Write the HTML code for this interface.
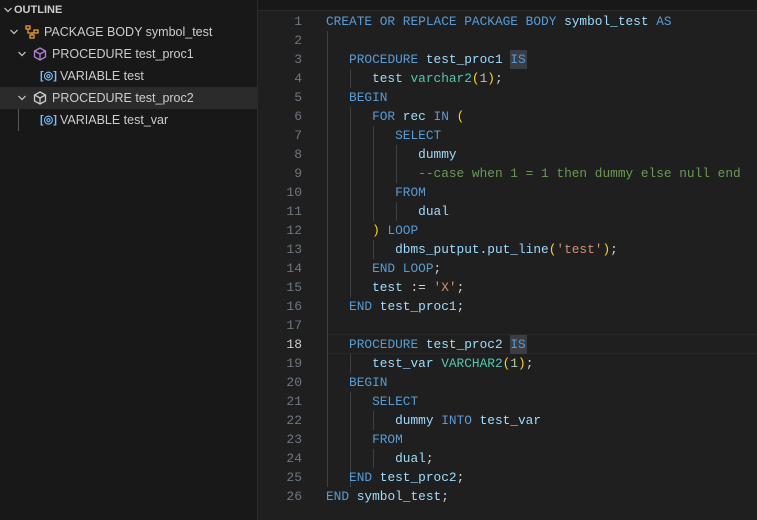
<!DOCTYPE html>
<html><head><meta charset="utf-8"><style>
body{margin:0;width:757px;height:520px;background:#1f1f1f;overflow:hidden;position:relative;font-family:"Liberation Sans",sans-serif}
#side{position:absolute;left:0;top:0;width:257px;height:520px;background:#181818;border-right:1px solid #2b2b2b}
.row{position:absolute;left:0;width:257px;height:22px;line-height:22px;font-size:12.5px;color:#cccccc;white-space:nowrap}
.sel{background:#2b2b2b}
.chev{position:absolute;top:0;width:10px;height:22px}
.ln{position:absolute;width:40px;left:262px;text-align:right;font-family:"Liberation Mono",monospace;font-size:13px;color:#6e7681;line-height:19px}
.cd{position:absolute;left:326px;font-family:"Liberation Mono",monospace;font-size:12.8px;color:#9cdcfe;line-height:19px;white-space:pre}
.k{color:#569cd6}.t{color:#4ec9b0}.n{color:#b5cea8}.s{color:#ce9178}.c{color:#6a9955}.y{color:#ffd700}.w{color:#d4d4d4}.p{color:#da70d6}
.g{position:absolute;width:1px;background:#404040}
</style></head><body>
<div style="position:absolute;left:258px;top:0;width:499px;height:10px;background:#181818;border-bottom:1px solid #2b2b2b"></div>
<div id="side">
<div class="row" style="top:-1px;font-weight:bold;font-size:11px"><svg class="chev" style="left:3px" viewBox="0 0 10 22"><path d="M1.5 9l3.5 3.5L8.5 9" stroke="#ccc" fill="none" stroke-width="1.2"/></svg><span style="position:absolute;left:14px">OUTLINE</span></div>
<div class="row" style="top:21px"><svg class="chev" style="left:9px" viewBox="0 0 10 22"><path d="M1.5 9l3.5 3.5L8.5 9" stroke="#ccc" fill="none" stroke-width="1.2"/></svg>
<svg style="position:absolute;left:25px;top:4px" width="14" height="14" viewBox="0 0 14 14"><g stroke="#ee9d28" fill="none" stroke-width="1.3"><rect x="1" y="1" width="4" height="3"/><rect x="9" y="5" width="4" height="3"/><rect x="5" y="10" width="4" height="3"/><path d="M3 4v4h6M7 8v2"/></g></svg>
<span style="position:absolute;left:44px">PACKAGE BODY symbol_test</span></div>
<div class="row" style="top:43px"><svg class="chev" style="left:17px" viewBox="0 0 10 22"><path d="M1.5 9l3.5 3.5L8.5 9" stroke="#ccc" fill="none" stroke-width="1.2"/></svg>
<svg style="position:absolute;left:33px;top:4px" width="14" height="14" viewBox="0 0 14 14"><g stroke="#b180d7" fill="none" stroke-width="1.3"><path d="M7 1l5.5 3v6L7 13 1.5 10V4z"/><path d="M1.5 4L7 7l5.5-3M7 7v6"/></g></svg>
<span style="position:absolute;left:52px">PROCEDURE test_proc1</span></div>
<div class="row" style="top:65px"><span style="position:absolute;left:40px;color:#75beff;font-size:11px;font-weight:bold">[◎]</span><span style="position:absolute;left:60px">VARIABLE test</span></div>
<div class="row sel" style="top:87px"><svg class="chev" style="left:17px" viewBox="0 0 10 22"><path d="M1.5 9l3.5 3.5L8.5 9" stroke="#ccc" fill="none" stroke-width="1.2"/></svg>
<svg style="position:absolute;left:33px;top:4px" width="14" height="14" viewBox="0 0 14 14"><g stroke="#cccccc" fill="none" stroke-width="1.3"><path d="M7 1l5.5 3v6L7 13 1.5 10V4z"/><path d="M1.5 4L7 7l5.5-3M7 7v6"/></g></svg>
<span style="position:absolute;left:52px">PROCEDURE test_proc2</span></div>
<div style="position:absolute;left:18px;top:109px;width:1px;height:22px;background:#585858"></div>
<div class="row" style="top:109px"><span style="position:absolute;left:40px;color:#75beff;font-size:11px;font-weight:bold">[◎]</span><span style="position:absolute;left:60px">VARIABLE test_var</span></div>
</div>
<div style="position:absolute;left:325px;top:334px;width:432px;height:18px;border-top:1px solid #282828;border-bottom:1px solid #282828"></div>
<div class="g" style="left:327px;top:31px;height:456px"></div>
<div class="g" style="left:350px;top:69px;height:19px"></div>
<div class="g" style="left:350px;top:107px;height:190px"></div>
<div class="g" style="left:373px;top:126px;height:95px"></div>
<div class="g" style="left:396px;top:145px;height:38px"></div>
<div class="g" style="left:396px;top:202px;height:19px"></div>
<div class="g" style="left:373px;top:240px;height:19px"></div>
<div class="g" style="left:350px;top:354px;height:19px"></div>
<div class="g" style="left:350px;top:392px;height:95px"></div>
<div class="g" style="left:373px;top:411px;height:19px"></div>
<div class="g" style="left:373px;top:449px;height:19px"></div>
<div style="position:absolute;left:510px;top:50px;width:17px;height:19px;background:#3a3d41"></div>
<div style="position:absolute;left:510px;top:335px;width:17px;height:19px;background:#3a3d41"></div>
<div id="code"></div>
<script>
var L=[
'<span class="k">CREATE OR REPLACE PACKAGE BODY</span> symbol_test <span class="k">AS</span>',
'',
'   <span class="k">PROCEDURE</span> test_proc1 <span class="k">IS</span>',
'      test <span class="t">varchar2</span><span class="y">(</span><span class="n">1</span><span class="y">)</span><span class="w">;</span>',
'   <span class="k">BEGIN</span>',
'      <span class="k">FOR</span> rec <span class="k">IN</span> <span class="y">(</span>',
'         <span class="k">SELECT</span>',
'            dummy',
'            <span class="c">--case when 1 = 1 then dummy else null end</span>',
'         <span class="k">FROM</span>',
'            dual',
'      <span class="y">)</span> <span class="k">LOOP</span>',
'         dbms_putput.put_line<span class="y">(</span><span class="s">\'test\'</span><span class="y">)</span><span class="w">;</span>',
'      <span class="k">END LOOP</span><span class="w">;</span>',
'      test <span class="w">:=</span> <span class="s">\'X\'</span><span class="w">;</span>',
'   <span class="k">END</span> test_proc1<span class="w">;</span>',
'',
'   <span class="k">PROCEDURE</span> test_proc2 <span class="k">IS</span>',
'      test_var <span class="t">VARCHAR2</span><span class="y">(</span><span class="n">1</span><span class="y">)</span><span class="w">;</span>',
'   <span class="k">BEGIN</span>',
'      <span class="k">SELECT</span>',
'         dummy <span class="k">INTO</span> test_var',
'      <span class="k">FROM</span>',
'         dual<span class="w">;</span>',
'   <span class="k">END</span> test_proc2<span class="w">;</span>',
'<span class="k">END</span> symbol_test<span class="w">;</span>'];
var h='';
for(var i=0;i<L.length;i++){var t=12+19*i;
h+='<div class="ln" style="top:'+t+'px'+(i==17?';color:#cccccc':'')+'">'+(i+1)+'</div><div class="cd" style="top:'+t+'px">'+L[i]+'</div>';}
document.getElementById('code').innerHTML=h;
</script>
</body></html>
